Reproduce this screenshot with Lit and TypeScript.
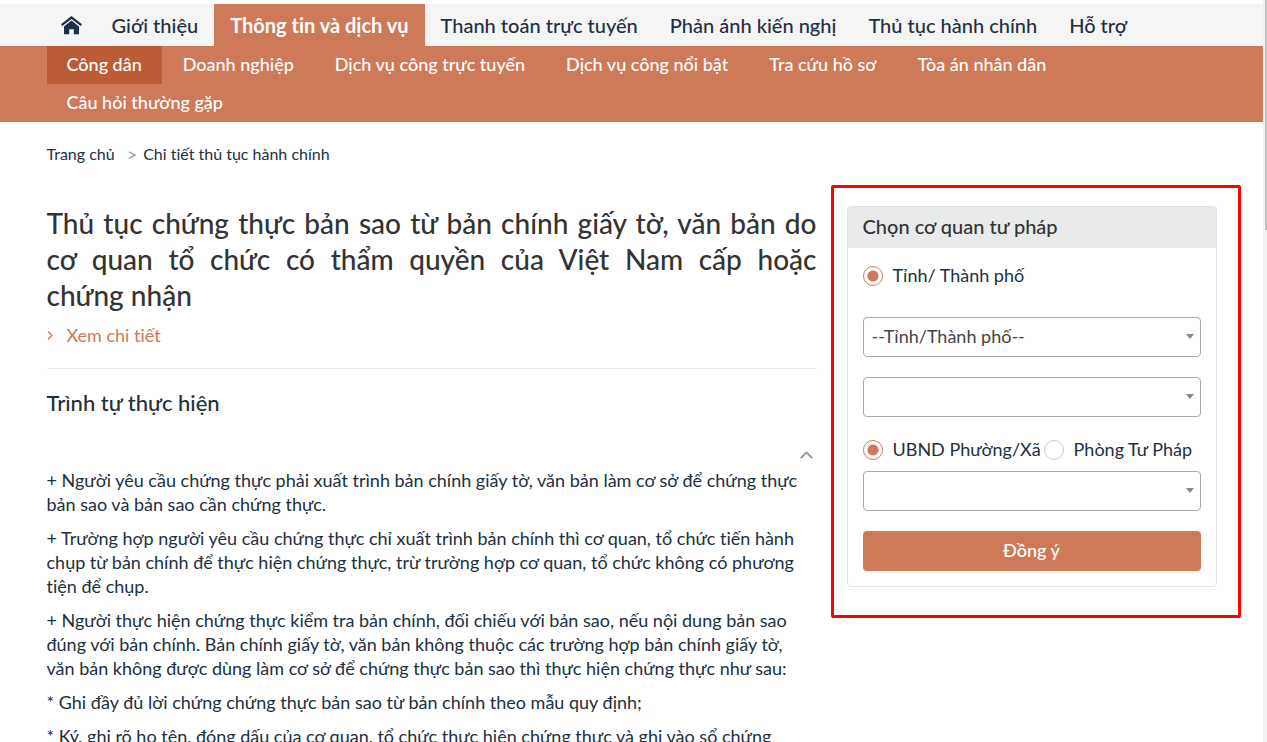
import { LitElement, html, css } from "lit";
import { customElement, property, state } from "lit/decorators.js";
import { classMap } from "lit/directives/class-map.js";

const MENU = [
  "Giới thiệu",
  "Thông tin và dịch vụ",
  "Thanh toán trực tuyến",
  "Phản ánh kiến nghị",
  "Thủ tục hành chính",
  "Hỗ trợ",
];

const SUBMENU = [
  "Công dân",
  "Doanh nghiệp",
  "Dịch vụ công trực tuyến",
  "Dịch vụ công nổi bật",
  "Tra cứu hồ sơ",
  "Tòa án nhân dân",
  "Câu hỏi thường gặp",
];

const STEPS = [
  "+ Người yêu cầu chứng thực phải xuất trình bản chính giấy tờ, văn bản làm cơ sở để chứng thực bản sao và bản sao cần chứng thực.",
  "+ Trường hợp người yêu cầu chứng thực chỉ xuất trình bản chính thì cơ quan, tổ chức tiến hành chụp từ bản chính để thực hiện chứng thực, trừ trường hợp cơ quan, tổ chức không có phương tiện để chụp.",
  "+ Người thực hiện chứng thực kiểm tra bản chính, đối chiếu với bản sao, nếu nội dung bản sao đúng với bản chính. Bản chính giấy tờ, văn bản không thuộc các trường hợp bản chính giấy tờ, văn\u00a0bản không được dùng làm cơ sở để chứng thực bản sao thì thực hiện chứng thực như sau:",
  "* Ghi đầy đủ lời chứng chứng thực bản sao từ bản chính theo mẫu quy định;",
  "* Ký, ghi rõ họ tên, đóng dấu của cơ quan, tổ chức thực hiện chứng thực và ghi vào sổ chứng",
];

@customElement("site-nav")
export class SiteNav extends LitElement {
  static styles = css`
    :host {
      display: block;
      padding-top: 4px;
    }
    .main {
      background: #f5f5f5;
    }
    .sub {
      background: #ce7a58;
    }
    .row {
      display: flex;
      flex-wrap: wrap;
      box-sizing: border-box;
      max-width: 1200px;
      margin: 0 auto;
      padding: 0 15px;
    }
    .sub .row {
      column-gap: 1px;
    }
    a {
      text-decoration: none;
      font-weight: 500;
    }
    .item {
      padding: 0 16px;
      font-size: 20px;
      line-height: 42px;
      height: 42px;
      color: #1e2f41;
    }
    .item.active {
      background: #ce7a58;
      color: #fff;
      font-weight: 700;
    }
    .item.home {
      display: flex;
      align-items: center;
      padding: 0 14px;
    }
    .child {
      padding: 0 20px 2px;
      font-size: 18px;
      line-height: 36px;
      color: #fff;
    }
    .child.active {
      background: #bc5c36;
    }
  `;

  render() {
    return html`
      <nav class="main" aria-label="Menu">
        <div class="row">
          <a class="item home" href="#" aria-label="Trang chủ">
            <svg width="21" height="19" viewBox="0 0 21 19" fill="#1e2f49">
              <path d="M10.500 0 0 8.200l1.300 1.800 9.200-7 9.200 7L21 8.200z" />
              <path d="M10.500 4.600 3 10.400v7.900h5.200v-5h4.600v5H18v-7.900z" />
            </svg>
          </a>
          ${MENU.map(
            (t, i) => html`<a class=${classMap({ item: true, active: i === 1 })} href="#">${t}</a>`
          )}
        </div>
      </nav>
      <nav class="sub" aria-label="Thông tin và dịch vụ">
        <div class="row">
          ${SUBMENU.map(
            (t, i) => html`<a class=${classMap({ child: true, active: i === 0 })} href="#">${t}</a>`
          )}
        </div>
      </nav>
    `;
  }
}

@customElement("radio-option")
export class RadioOption extends LitElement {
  @property() label = "";
  @property({ type: Boolean }) checked = false;

  static styles = css`
    label {
      display: flex;
      align-items: center;
      gap: 10px;
      font-size: 18px;
      line-height: 24px;
      white-space: nowrap;
    }
    input {
      appearance: none;
      box-sizing: border-box;
      width: 20px;
      height: 20px;
      margin: 2px 0 0;
      border: 1px solid #ccc;
      border-radius: 50%;
      background: #fff;
    }
    input:checked {
      border-color: #ce7a58;
      background: radial-gradient(circle, #ce7a58 5px, #fff 6px);
    }
  `;

  private pick() {
    this.dispatchEvent(new CustomEvent("pick"));
  }

  render() {
    return html`<label>
      <input type="radio" .checked=${this.checked} @change=${this.pick} />${this.label}
    </label>`;
  }
}

@customElement("agency-form")
export class AgencyForm extends LitElement {
  @state() private office = 0;

  static styles = css`
    :host {
      display: block;
      position: relative;
    }
    .card {
      border: 1px solid #e1e1e1;
      border-radius: 4px;
      overflow: hidden;
    }
    .head {
      margin: 0;
      padding: 0 15px 3px;
      background: #e8eaeb;
      color: #333;
      font-size: 20px;
      font-weight: 500;
      line-height: 38px;
    }
    form {
      display: flex;
      flex-direction: column;
      gap: 20px;
      padding: 15px;
    }
    .city {
      margin-bottom: 10px;
    }
    .group {
      display: flex;
      flex-direction: column;
      gap: 10px;
    }
    .offices {
      display: flex;
      flex-wrap: wrap;
      gap: 3px;
    }
    .select {
      display: flex;
      position: relative;
    }
    .select::after {
      content: "";
      position: absolute;
      right: 7px;
      top: 17px;
      border: 4px solid transparent;
      border-top: 5px solid #888;
      border-bottom: 0;
      pointer-events: none;
    }
    select {
      appearance: none;
      width: 100%;
      height: 40px;
      padding: 0 25px 2px 8px;
      border: 1px solid #aaa;
      border-radius: 4px;
      background: #fff;
      color: #444;
      font: inherit;
      font-size: 18px;
    }
    button {
      height: 40px;
      padding: 0 0 2px;
      border: 0;
      border-radius: 4px;
      background: #ce7a58;
      color: #fff;
      font: inherit;
      font-size: 18px;
      font-weight: 500;
    }
    .mark {
      position: absolute;
      inset: -21px -24px -31px -16px;
      border: 3px solid #f00;
      border-radius: 2px;
      pointer-events: none;
    }
  `;

  render() {
    return html`
      <div class="card">
        <h2 class="head">Chọn cơ quan tư pháp</h2>
        <form @submit=${(e: Event) => e.preventDefault()}>
          <radio-option class="city" label="Tỉnh/ Thành phố" checked></radio-option>
          <div class="select">
            <select aria-label="Tỉnh/Thành phố">
              <option>--Tỉnh/Thành phố--</option>
            </select>
          </div>
          <div class="select">
            <select aria-label="Quận/Huyện">
              <option></option>
            </select>
          </div>
          <div class="group">
            <div class="offices">
              ${["UBND Phường/Xã", "Phòng Tư Pháp"].map(
                (t, i) => html`<radio-option
                  .label=${t}
                  .checked=${this.office === i}
                  @pick=${() => (this.office = i)}
                ></radio-option>`
              )}
            </div>
            <div class="select">
              <select aria-label="Cơ quan">
                <option></option>
              </select>
            </div>
          </div>
          <button type="submit">Đồng ý</button>
        </form>
      </div>
      <div class="mark"></div>
    `;
  }
}

@customElement("app-root")
export class AppRoot extends LitElement {
  @state() private open = true;

  static styles = css`
    :host {
      display: grid;
      grid-template-columns: minmax(0, 1fr) 4px;
      height: 100vh;
      overflow: hidden;
      background: #fff;
      color: #212f3f;
      font-family: Lato, "Open Sans", sans-serif;
      font-size: 18px;
      font-variant-ligatures: none;
    }
    .page {
      overflow-y: auto;
      scrollbar-width: none;
    }
    .track {
      background: #f1f1f1;
      padding-left: 2px;
    }
    .thumb {
      height: 31%;
      background: #c1c1c1;
    }
    .container {
      box-sizing: border-box;
      max-width: 1200px;
      margin: 0 auto;
      padding: 0 15px;
    }
    .crumbs {
      display: flex;
      gap: 12px;
      padding: 20px 0 39px;
      font-size: 16px;
      line-height: 24px;
    }
    .crumbs a {
      color: inherit;
      text-decoration: none;
    }
    .trail {
      display: flex;
      gap: 6px;
    }
    .sep {
      color: #999;
      font-size: 18px;
    }
    .columns {
      display: grid;
      grid-template-columns: minmax(0, 770fr) minmax(0, 370fr);
      gap: 30px;
      align-items: start;
    }
    agency-form {
      margin-top: 1px;
    }
    h1 {
      margin: 0;
      color: #333;
      font-size: 28px;
      font-weight: 500;
      line-height: 36px;
      text-align: justify;
    }
    .more {
      display: flex;
      align-items: center;
      gap: 14px;
      padding: 10px 0 21px;
      border-bottom: 1px solid #e8eef4;
      line-height: 24px;
      color: #ce7a58;
      text-decoration: none;
    }
    h2 {
      margin: 19px 0 28px;
      font-size: 22px;
      font-weight: 500;
      line-height: 30px;
    }
    .toggle {
      display: flex;
      justify-content: flex-end;
      width: 100%;
      padding: 5px 4px 9px;
      border: 0;
      background: none;
    }
    .steps {
      display: flex;
      flex-direction: column;
      gap: 10px;
      padding-bottom: 20px;
      line-height: 24px;
    }
    .steps p {
      margin: 0;
    }
  `;

  render() {
    return html`
      <div class="page">
        <site-nav></site-nav>
        <div class="container">
          <div class="crumbs">
            <a href="#">Trang chủ</a>
            <span class="trail"><span class="sep">&gt;</span><span>Chi tiết thủ tục hành chính</span></span>
          </div>
          <div class="columns">
            <main>
              <h1>
                Thủ tục chứng thực bản sao từ bản chính giấy tờ, văn bản do cơ quan tổ chức có thẩm
                quyền của Việt Nam cấp hoặc chứng&nbsp;nhận
              </h1>
              <a class="more" href="#">
                <svg width="6" height="9" viewBox="0 0 6 9" fill="none" stroke="#ce7a58" stroke-width="1.3">
                  <path d="M1 .5 5 4.500 1 8.500" />
                </svg>
                Xem chi tiết
              </a>
              <h2>Trình tự thực hiện</h2>
              <button
                class="toggle"
                aria-label="Thu gọn"
                aria-expanded=${this.open}
                @click=${() => (this.open = !this.open)}
              >
                <svg width="13" height="8" viewBox="0 0 13 8" fill="none" stroke="#8b9198" stroke-width="1.7">
                  <path d="M.7 7.200 6.500 1.400l5.800 5.800" />
                </svg>
              </button>
              ${this.open ? html`<div class="steps">${STEPS.map((t) => html`<p>${t}</p>`)}</div>` : ""}
            </main>
            <agency-form></agency-form>
          </div>
        </div>
      </div>
      <div class="track"><div class="thumb"></div></div>
    `;
  }
}
